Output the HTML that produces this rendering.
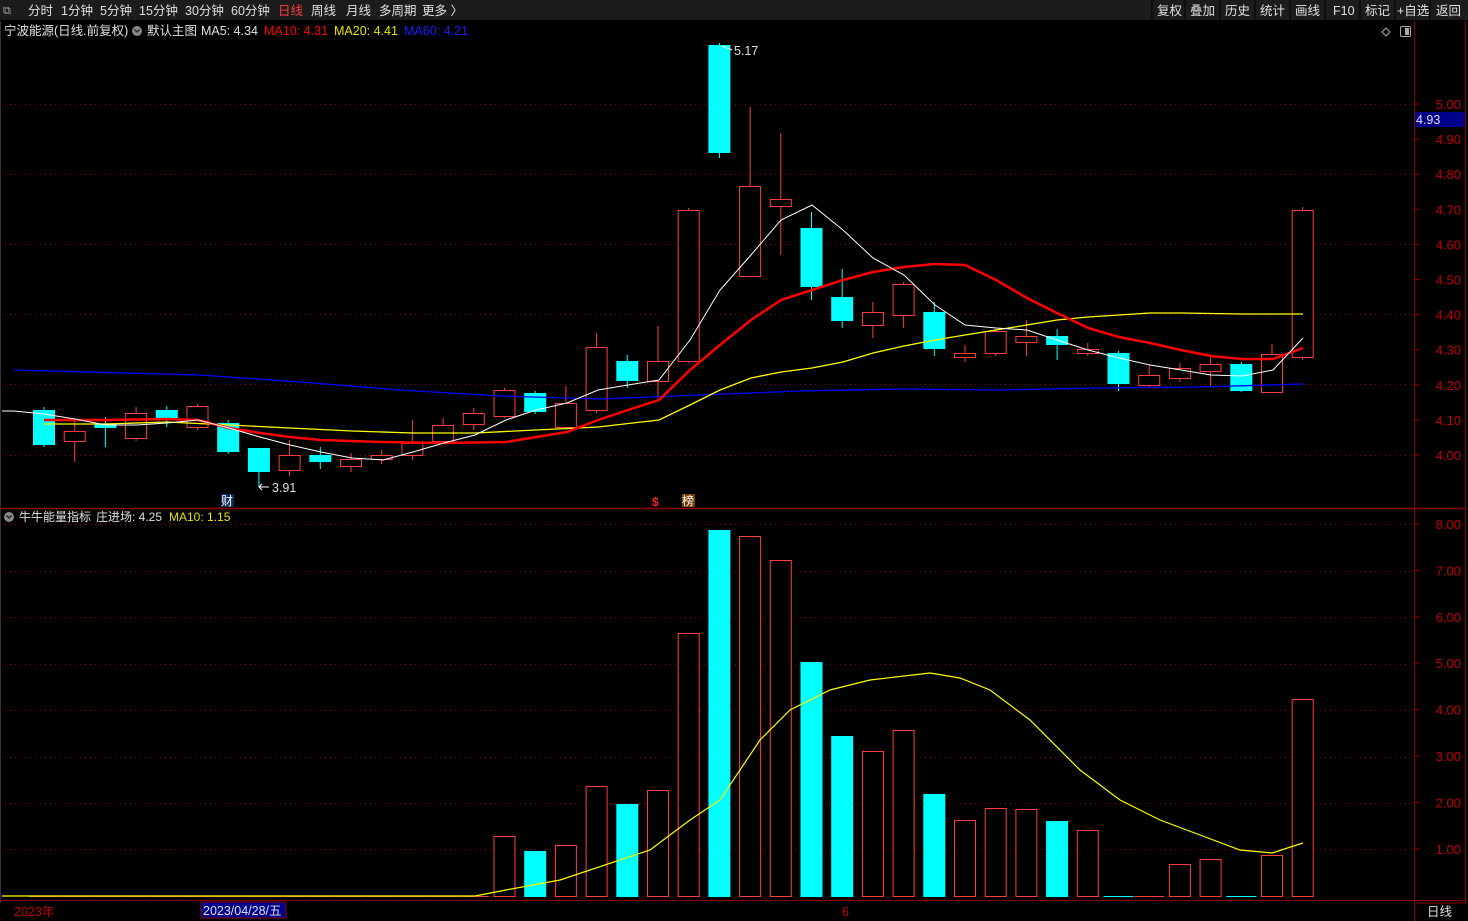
<!DOCTYPE html>
<html><head><meta charset="utf-8"><style>
html,body{margin:0;padding:0;background:#000;width:1468px;height:921px;overflow:hidden}
body{font-family:"Liberation Sans","Noto Sans CJK SC",sans-serif;}
svg text{font-family:"Liberation Sans","Noto Sans CJK SC",sans-serif;}
</style></head><body>
<svg id="s" width="1468" height="921" xmlns="http://www.w3.org/2000/svg" style="display:block">
<rect width="1468" height="921" fill="#000"/>
<rect x="0" y="0" width="1468" height="20" fill="#1c1c1c"/>
<g font-size="12.5" fill="#e0e0e0">
<text x="3" y="14" fill="#aaa" font-size="11">⧉</text>
<text x="28" y="15">分时</text><text x="61" y="15">1分钟</text><text x="100" y="15">5分钟</text>
<text x="139" y="15">15分钟</text><text x="185" y="15">30分钟</text><text x="231" y="15">60分钟</text>
<text x="278" y="15" fill="#ff3c3c">日线</text><text x="311" y="15">周线</text><text x="346" y="15">月线</text>
<text x="379" y="15">多周期</text><text x="422" y="15">更多 〉</text>
</g>
<g stroke="#000" stroke-width="1">
<line x1="1152" y1="0" x2="1152" y2="20"/><line x1="1185" y1="0" x2="1185" y2="20"/><line x1="1220" y1="0" x2="1220" y2="20"/><line x1="1255" y1="0" x2="1255" y2="20"/><line x1="1290" y1="0" x2="1290" y2="20"/><line x1="1325" y1="0" x2="1325" y2="20"/><line x1="1360" y1="0" x2="1360" y2="20"/><line x1="1395" y1="0" x2="1395" y2="20"/><line x1="1430" y1="0" x2="1430" y2="20"/>
</g>
<g font-size="12.5" fill="#e0e0e0">
<text x="1157" y="15">复权</text><text x="1190" y="15">叠加</text><text x="1225" y="15">历史</text><text x="1260" y="15">统计</text><text x="1295" y="15">画线</text><text x="1333" y="15">F10</text><text x="1365" y="15">标记</text><text x="1397" y="15">+自选</text><text x="1436" y="15">返回</text>
</g>
<line x1="1414.5" y1="21" x2="1414.5" y2="921" stroke="#8b0000"/>
<line x1="1465.5" y1="21" x2="1465.5" y2="903" stroke="#8b0000"/>
<line x1="0.5" y1="21" x2="0.5" y2="903" stroke="#333"/>
<line x1="0" y1="508.5" x2="1466" y2="508.5" stroke="#8b0000" stroke-width="1.5"/>
<line x1="0" y1="900.5" x2="1466" y2="900.5" stroke="#8b0000"/>
<line x1="1414" y1="903" x2="1466" y2="903" stroke="#8b0000"/>
<g id="grid"></g>
<g id="axis" font-size="13" fill="#c00000"></g>
<rect x="1415" y="112" width="50" height="15" fill="#00008b"/>
<text x="1416" y="124" font-size="12.5" fill="#e0e0e0">4.93</text>
<g font-size="12.5">
<text x="4" y="35" fill="#e0e0e0">宁波能源(日线.前复权)</text>
<circle cx="137" cy="31" r="5" fill="#888"/><path d="M134.5 29.5l2.5 2.5 2.5-2.5" stroke="#222" fill="none" stroke-width="1.3"/>
<text x="147" y="35" fill="#e0e0e0">默认主图</text>
<text x="201" y="35" fill="#e0e0e0">MA5: 4.34</text>
<text x="264" y="35" fill="#ff0000">MA10: 4.31</text>
<text x="334" y="35" fill="#e5e500">MA20: 4.41</text>
<text x="404" y="35" fill="#1a1aff">MA60: 4.21</text>
</g>
<g font-size="12">
<circle cx="9" cy="517" r="5" fill="#888"/><path d="M6.5 515.5l2.5 2.5 2.5-2.5" stroke="#222" fill="none" stroke-width="1.3"/>
<text x="19" y="521" fill="#e0e0e0">牛牛能量指标</text>
<text x="96" y="521" fill="#e0e0e0">庄进场: 4.25</text>
<text x="169" y="521" fill="#e5e500">MA10: 1.15</text>
</g>
<path d="M1386 28l4 4-4 4-4-4z" stroke="#aaa" fill="none"/>
<rect x="1400.5" y="26.5" width="10" height="10" rx="1.5" stroke="#aaa" fill="none"/><rect x="1405" y="28" width="4" height="7" fill="#aaa"/>
<g id="cand"></g>
<g id="vol"></g>
<g id="lines" fill="none"></g>
<text x="734" y="55" font-size="12.5" fill="#e0e0e0">5.17</text>
<path d="M722 46l10 4" stroke="#fff"/>
<path d="M259 487h10" stroke="#fff"/><path d="M262 484l-3 3 3 3" stroke="#fff" fill="none"/>
<text x="272" y="492" font-size="12.5" fill="#e0e0e0">3.91</text>
<rect x="221" y="494" width="13" height="13" fill="#0b2a55"/>
<text x="221" y="505" font-size="12" fill="#fff">财</text>
<text x="652" y="506" font-size="12" fill="#ff2020" font-weight="bold">$</text>
<rect x="682" y="494" width="13" height="13" fill="#7a3a00"/>
<text x="682" y="505" font-size="12" fill="#fff">榜</text>
<text x="14" y="916" font-size="12.5" fill="#c00000">2023年</text>
<rect x="201" y="902" width="85" height="16" fill="#00008b" stroke="#8b0000"/>
<text x="203" y="915" font-size="12.5" fill="#e0e0e0">2023/04/28/五</text>
<text x="842" y="916" font-size="12.5" fill="#c00000">6</text>
<text x="1427" y="916" font-size="12.5" fill="#e0e0e0">日线</text>
</svg>
<script>
var NS="http://www.w3.org/2000/svg";
function el(p,t,a){var e=document.createElementNS(NS,t);for(var k in a)e.setAttribute(k,a[k]);document.getElementById(p).appendChild(e);return e;}
[104,174,244,314,384,455].forEach(function(y){el("grid","line",{x1:0,y1:y+.5,x2:1414,y2:y+.5,stroke:"#8b0000","stroke-dasharray":"1 4"});});
[524,571,617,664,710,757,803,849].forEach(function(y){el("grid","line",{x1:0,y1:y+.5,x2:1414,y2:y+.5,stroke:"#8b0000","stroke-dasharray":"1 4"});});
var pl=["5.00","4.90","4.80","4.70","4.60","4.50","4.40","4.30","4.20","4.10","4.00"];
pl.forEach(function(t,i){var y=104+i*35.1;el("axis","line",{x1:1414,y1:y,x2:1420,y2:y,stroke:"#8b0000"});var e=el("axis","text",{x:1461,y:y+5,"text-anchor":"end"});e.textContent=t;});
["8.00","7.00","6.00","5.00","4.00","3.00","2.00","1.00"].forEach(function(t,i){var y=524+i*46.4;el("axis","line",{x1:1414,y1:y,x2:1420,y2:y,stroke:"#8b0000"});var e=el("axis","text",{x:1461,y:y+5,"text-anchor":"end"});e.textContent=t;});
var C=[[0,410,445,407,447],[1,431,441,420,462],[0,424,428,417,447],[1,413,438,407,441],[0,410,418,406,427],[1,406,427,404,430],[0,423,452,420,454],[0,448,472,448,487],[1,455,470,440,476],[0,455,462,447,469],[1,459,466,453,472],[1,455,459,450,464],[1,443,455,420,460],[1,425,441,418,444],[1,413,424,408,430],[1,390,416,388,418],[0,393,412,391,414],[1,403,427,386,430],[1,347,410,333,413],[0,361,381,355,388],[1,361,381,326,398],[1,210,361,208,363],[0,45,153,43,158],[1,186,276,107,277],[1,199,206,133,255],[0,228,287,212,300],[0,297,321,269,328],[1,312,325,302,338],[1,284,315,282,328],[0,312,349,302,356],[1,353,357,345,362],[1,331,353,329,356],[1,336,342,320,356],[0,336,345,329,360],[1,349,353,343,356],[0,353,384,351,391],[1,375,385,365,388],[1,368,378,363,382],[1,364,371,355,386],[0,364,391,362,392],[1,354,392,344,392],[1,210,357,207,360]];
var V=[0,0,0,0,0,0,0,0,0,0,0,0,0,0,0,836,851,845,786,804,790,633,530,536,560,662,736,751,730,794,820,808,809,821,830,896,896,864,859,896,855,699];
C.forEach(function(c,i){var x=44+30.7*i;var col=c[0]?"#ff3c3c":"#00ffff";
el("cand","line",{x1:x,y1:c[3],x2:x,y2:c[4],stroke:col});
if(c[0])el("cand","rect",{x:x-10.5,y:c[1]+.5,width:21,height:c[2]-c[1],fill:"#000",stroke:col});
else el("cand","rect",{x:x-11,y:c[1],width:22,height:c[2]-c[1],fill:col});
var v=V[i];
if(v==0||v>=896){el("vol","line",{x1:x-15,y1:896.5,x2:x+15,y2:896.5,stroke:c[0]?"#ff3c3c":(v>=896?"#00ffff":"#ff3c3c")});}
else if(c[0])el("vol","rect",{x:x-10.5,y:v+.5,width:21,height:896-v,fill:"#000",stroke:col});
else el("vol","rect",{x:x-11,y:v,width:22,height:897-v,fill:col});
});
function poly(pts,col,w){el("lines","polyline",{points:pts.map(function(p){return p.join(",")}).join(" "),stroke:col,"stroke-width":w,fill:"none"});}
poly([[14,370],[200,375],[300,382],[400,390],[500,396],[600,399],[700,395],[800,391],[900,389],[1000,390],[1100,388],[1200,387],[1303,384]],"#0000ff",1.3);
poly([[44,424],[106,424],[167,422],[229,425],[290,428],[352,431],[413,433],[475,433],[536,430],[598,427],[659,420],[690,405],[720,390],[751,378],[781,372],[812,368],[843,362],[873,353],[904,346],[935,340],[965,335],[996,330],[1027,325],[1057,320],[1088,317],[1119,315],[1150,313],[1181,313],[1242,314],[1303,314]],"#ffff00",1.3);
poly([[44,420],[106,420],[167,419],[198,420],[229,428],[260,433],[290,437],[321,440],[383,442],[444,443],[506,442],[567,432],[598,420],[628,410],[659,400],[690,370],[720,345],[751,320],[781,300],[812,290],[843,280],[873,272],[904,267],[935,264],[965,265],[996,280],[1027,298],[1057,313],[1088,328],[1119,337],[1150,343],[1181,350],[1211,356],[1242,359],[1273,359],[1303,348]],"#ff0000",2.5);
poly([[2,411],[14,411],[44,414],[75,419],[106,425],[137,425],[167,423],[198,420],[229,428],[260,437],[290,445],[321,452],[352,458],[383,460],[413,452],[444,443],[475,435],[506,420],[536,410],[567,403],[598,390],[628,385],[659,380],[690,340],[720,290],[751,255],[781,220],[812,205],[843,230],[873,258],[904,275],[935,305],[965,325],[996,328],[1027,330],[1057,340],[1088,350],[1119,358],[1150,365],[1181,370],[1211,375],[1242,376],[1273,370],[1303,338]],"#ffffff",1);
poly([[2,896],[475,896],[506,890],[560,880],[650,850],[690,820],[720,800],[760,740],[790,710],[830,690],[870,680],[930,673],[960,678],[990,690],[1030,720],[1080,770],[1120,800],[1160,820],[1200,835],[1240,850],[1272,853],[1303,843]],"#ffff00",1.2);
</script>
</body></html>
